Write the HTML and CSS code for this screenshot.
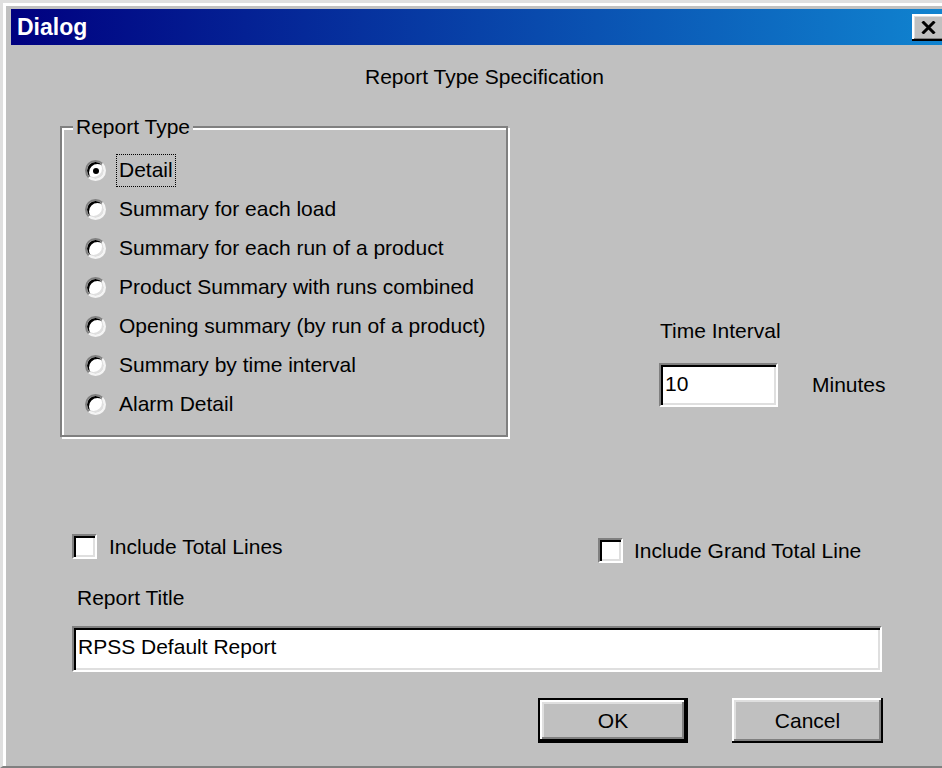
FILE: index.html
```html
<!DOCTYPE html>
<html lang="en">
<head>
<meta charset="utf-8">
<title>Dialog</title>
<link rel="stylesheet" href="styles.css">
</head>
<body>
<div class="window">
  <div class="titlebar">
    <span class="title">Dialog</span>
    <button class="close" type="button" aria-label="Close">
      <svg width="15" height="13" viewBox="0 0 15 13"><path d="M1.5 0.5 L13.5 12.5 M13.5 0.5 L1.5 12.5" stroke="#000" stroke-width="3"/></svg>
    </button>
  </div>

  <div class="client">
    <div class="heading">Report Type Specification</div>

    <div class="main-row">
      <fieldset class="group">
        <legend>Report Type</legend>
        <label class="radio-row"><span class="radio checked"></span><span class="caption focus">Detail</span></label>
        <label class="radio-row"><span class="radio"></span><span class="caption">Summary for each load</span></label>
        <label class="radio-row"><span class="radio"></span><span class="caption">Summary for each run of a product</span></label>
        <label class="radio-row"><span class="radio"></span><span class="caption">Product Summary with runs combined</span></label>
        <label class="radio-row"><span class="radio"></span><span class="caption">Opening summary (by run of a product)</span></label>
        <label class="radio-row"><span class="radio"></span><span class="caption">Summary by time interval</span></label>
        <label class="radio-row"><span class="radio"></span><span class="caption">Alarm Detail</span></label>
      </fieldset>

      <div class="interval">
        <div class="interval-label">Time Interval</div>
        <div class="interval-row">
          <div class="field field-small">10</div>
          <span class="unit">Minutes</span>
        </div>
      </div>
    </div>

    <div class="checks">
      <label class="check-item"><span class="checkbox"></span><span>Include Total Lines</span></label>
      <label class="check-item check-right"><span class="checkbox"></span><span>Include Grand Total Line</span></label>
    </div>

    <div class="title-label">Report Title</div>
    <div class="field field-wide">RPSS Default Report</div>

    <div class="buttons">
      <button class="btn btn-default" type="button">OK</button>
      <button class="btn" type="button">Cancel</button>
    </div>
  </div>
</div>
</body>
</html>
```

FILE: styles.css
```css
html, body {
  margin: 0;
  height: 768px;
  overflow: hidden;
}

body {
  background: #c0c0c0;
  font-family: "Liberation Sans", Arial, sans-serif;
  font-size: 21px;
  line-height: 24px;
  color: #000;
}

/* window frame */
.window {
  width: 948px;
  height: 768px;
  box-sizing: border-box;
  border-top: 3px solid #dfdfdf;
  border-left: 3px solid #dfdfdf;
  border-bottom: 2px solid #808080;
  box-shadow: inset 3px 3px #fff;
  padding: 6px 0 0 8px;
  background: #c0c0c0;
}

.titlebar {
  height: 36px;
  display: flex;
  align-items: center;
  background: linear-gradient(to right, #000080, #1084d0);
}

.title {
  padding-left: 6px;
  color: #fff;
  font-weight: bold;
  font-size: 23px;
}

.close {
  margin-left: auto;
  margin-right: 3px;
  width: 33px;
  height: 27px;
  padding: 0;
  border: 0;
  background: #c0c0c0;
  display: flex;
  align-items: center;
  justify-content: center;
  box-shadow: inset -2px -2px #000, inset 2px 2px #fff, inset -3px -3px #808080, inset 3px 3px #dfdfdf;
}

.heading {
  margin-top: 20px;
  padding-left: 354px;
}

.main-row {
  display: flex;
  align-items: flex-start;
  margin-top: 26px;
}

/* etched group box */
.group {
  margin: 0 0 0 49px;
  width: 448px;
  box-sizing: border-box;
  border: 2px solid #808080;
  box-shadow: inset 2px 2px #fff, 2px 2px #fff;
  padding: 12px 0 11px 11px;
  min-width: 0;
}

.group legend {
  padding: 0 3px;
  background: #c0c0c0;
}

.radio-row {
  display: flex;
  align-items: center;
  height: 39px;
  margin-left: 12px;
}

.radio {
  position: relative;
  width: 21px;
  height: 21px;
  box-sizing: border-box;
  border-radius: 50%;
  background: #fff;
  border: 2px solid;
  border-color: #808080 #f4f4f4 #f4f4f4 #808080;
  box-shadow: inset 2px 2px #000, inset -2px -2px #dfdfdf;
  margin-right: 10px;
  flex: none;
}

.radio.checked::after {
  content: "";
  position: absolute;
  left: 5.5px;
  top: 5.5px;
  width: 6px;
  height: 6px;
  border-radius: 50%;
  background: #000;
}

.caption {
  border: 1px solid transparent;
  padding: 3px 2px 4px;
  white-space: nowrap;
}

.caption.focus {
  border: 1px dotted #000;
}

/* time interval */
.interval {
  margin-left: 151px;
  padding-top: 204px;
}

.interval-label {
  padding-left: 1px;
}

.interval-row {
  display: flex;
  align-items: center;
  margin-top: 20px;
}

.field {
  box-sizing: border-box;
  background: #fff;
  border: 2px solid;
  border-color: #808080 #fff #fff #808080;
  box-shadow: inset 2px 2px #000, inset -2px -2px #dfdfdf;
  padding-left: 4px;
  display: flex;
  align-items: center;
}

.field-small {
  width: 119px;
  height: 44px;
  padding-bottom: 2px;
}

.unit {
  margin-left: 34px;
}

/* check boxes */
.checks {
  display: grid;
  grid-template-columns: 526px auto;
  align-items: start;
  margin-top: 97px;
  padding-left: 61px;
}

.check-item {
  display: flex;
  align-items: center;
  gap: 12px;
  height: 25px;
  white-space: nowrap;
}

.check-right {
  margin-top: 4px;
  gap: 11px;
}

.checkbox {
  width: 25px;
  height: 25px;
  box-sizing: border-box;
  background: #fff;
  border: 2px solid;
  border-color: #808080 #fff #fff #808080;
  box-shadow: inset 2px 2px #000, inset -2px -2px #dfdfdf;
  flex: none;
}

.title-label {
  margin-top: 23px;
  padding-left: 66px;
}

.field-wide {
  margin: 16px 0 0 61px;
  width: 810px;
  height: 46px;
  padding-bottom: 5px;
}

/* push buttons */
.buttons {
  display: flex;
  justify-content: flex-end;
  gap: 44px;
  margin: 26px 0 0 61px;
  width: 811px;
}

.btn {
  height: 45px;
  width: 151px;
  box-sizing: border-box;
  border: 0;
  background: #c0c0c0;
  font: inherit;
  color: #000;
  padding: 0;
  box-shadow: inset -2px -2px #000, inset 2px 2px #fff, inset -4px -4px #808080, inset 4px 4px #dfdfdf;
}

.btn-default {
  width: 150px;
  border: 2px solid #000;
}
```
